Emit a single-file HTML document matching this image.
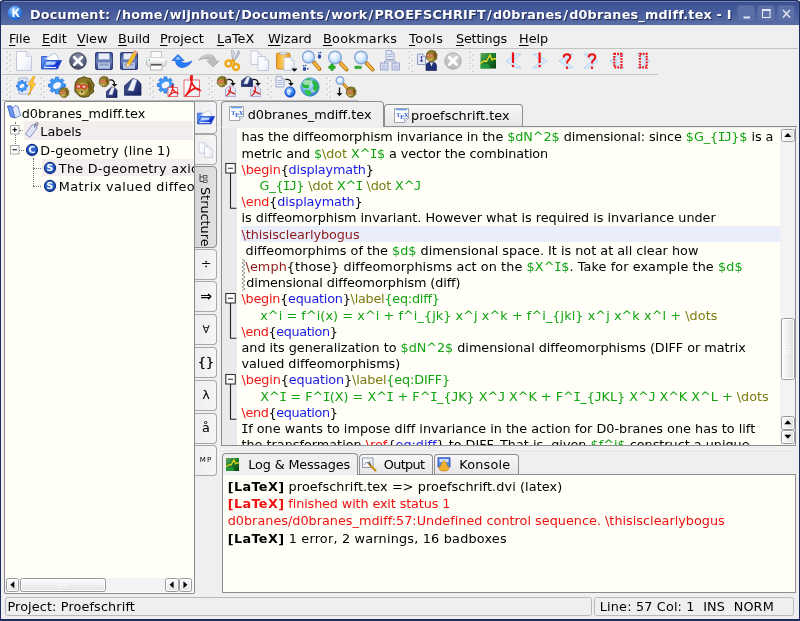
<!DOCTYPE html>
<html><head><meta charset="utf-8"><title>Kile</title>
<style>
*{box-sizing:border-box}
html,body{margin:0;padding:0}
body{width:800px;height:621px;position:relative;overflow:hidden;background:#fff;font-family:"DejaVu Sans","Liberation Sans",sans-serif;font-size:12.8px;color:#000}
.abs{position:absolute}
#win{will-change:transform;position:absolute;left:0;top:0;width:800px;height:621px;background:#efefef;border-radius:3px 3px 0 0;overflow:hidden}
#bl,#br,#bb{position:absolute;background:#1f2c5e}
#bl{left:0;top:0;width:1.3px;height:621px}
#br{right:0;top:0;width:1.3px;height:621px}
#bb{left:0;bottom:0;width:800px;height:1.7px}
#title{position:absolute;left:0;top:0;width:800px;height:25px;background:linear-gradient(#3b4f8d,#42579a 30%,#5a6ea6);border:1px solid #1f2c5e;border-bottom:none;border-radius:3px 3px 0 0}
#title .hl{position:absolute;left:3px;right:3px;top:0;height:1px;background:#6c80b4}
#ttext{position:absolute;left:29px;top:6px;line-height:16px;font-weight:bold;color:#fff;font-size:12.8px;white-space:pre;text-shadow:1px 1px 1px #1a254f;letter-spacing:.2px}
#ttext i{font-style:normal;margin:0 1.1px}
.tb{position:absolute;top:4px;width:18px;height:17px;border-radius:3px;background:#5c6fa7;border:1px solid #53669f}
#menubar{position:absolute;left:2px;top:25px;width:796px;height:23px;white-space:pre}
#menubar span{position:absolute;top:6px;line-height:16px;font-size:12.8px}
#menubar u{text-decoration:underline;text-underline-offset:1.5px}
.hline{position:absolute;height:1px;background:#c4c4c4}
.frame{position:absolute;background:#fffff7;border:1px solid #8e8e8e}
.t{position:absolute;white-space:pre}
.r{color:#f01616}.b{color:#1a1ae6}.g{color:#12a312}.o{color:#7a7a14}.m{color:#8e1a1a}
.t i{font-style:normal}
.sbtn{position:absolute;border:1px solid #9a9a9a;border-radius:2.500px;background:linear-gradient(#fdfdfd,#e2e2e2);box-shadow:inset 0 0 0 1px #fff}
.track{position:absolute;background:#f3f3f3;background-image:repeating-conic-gradient(#ececec 0 25%,#fafafa 0 50%);background-size:2px 2px}
.sbtn.v{background:linear-gradient(90deg,#fdfdfd,#dedede)}
.stab{position:absolute;border:1px solid #a8a8a8;border-left-color:#8a8a8a;border-radius:0 4px 4px 0;background:linear-gradient(90deg,#eeeeee,#f7f5f7)}
.stab.sel{background:linear-gradient(90deg,#d6d6d6,#e2e2e2);border-color:#8c8c8c}
.etab{position:absolute;border:1px solid #8e8e8e;border-bottom:none;border-radius:4px 4px 0 0;background:linear-gradient(#f8f8f8,#e6e6e6)}
.etab.sel{background:#efefef}
.sbox{position:absolute;border:1px solid #b9b9b9;border-radius:2.5px}
.t s{text-decoration:none;font-family:"DejaVu Sans Mono","Liberation Mono",monospace;margin:0 -.55px}
.t b{letter-spacing:.38px}
</style></head><body>
<div id="win">
<div id="title"><div class="hl"></div>
<svg class="abs" style="left:6px;top:4px" width="16" height="16" viewBox="0 0 16 16"><defs><radialGradient id="gk" cx=".4" cy=".3" r=".8"><stop offset="0" stop-color="#9fd0ff"/><stop offset=".6" stop-color="#2f7fe8"/><stop offset="1" stop-color="#0f4fc0"/></radialGradient></defs><circle cx="8" cy="8" r="7.200" fill="url(#gk)"/><path d="M5.500 3.500 h2 v3.500 l2.800 -3.500 h2.300 l-3 3.700 l3.300 4.800 h-2.400 l-2.300 -3.500 l-.7 .8 v2.700 h-2 z" fill="#fff"/></svg>
<div id="ttext">Document: <i>/</i>home<i>/</i>wijnhout<i>/</i>Documents<i>/</i>work<i>/</i>PROEFSCHRIFT<i>/</i>d0branes<i>/</i>d0branes_mdiff.tex - I</div>
<div class="tb" style="left:736px"></div><div class="tb" style="left:756px"></div><div class="tb" style="left:776px"></div>
<svg class="abs" style="left:736px;top:3px" width="60" height="19" viewBox="0 0 60 19"><path d="M6.500 13.500 h6.500" stroke="#e4e9f6" stroke-width="2"/><rect x="25.500" y="6" width="7.500" height="7.500" fill="none" stroke="#e4e9f6" stroke-width="1.100"/><path d="M25 6 h8.500" stroke="#e4e9f6" stroke-width="1.800"/><path d="M46 6 l7 7.500 M53 6 l-7 7.500" stroke="#e4e9f6" stroke-width="1.500"/></svg>
</div>
<div id="menubar">
<span style="left:7px"><u>F</u>ile</span><span style="left:40px"><u>E</u>dit</span><span style="left:75px"><u>V</u>iew</span><span style="left:116px"><u>B</u>uild</span><span style="left:158px"><u>P</u>roject</span><span style="left:215px"><u>L</u>aTeX</span><span style="left:266px"><u>W</u>izard</span><span style="left:321px;letter-spacing:.3px"><u>B</u>ookmarks</span><span style="left:407px;letter-spacing:.6px"><u>T</u>ools</span><span style="left:454px;letter-spacing:-.2px"><u>S</u>ettings</span><span style="left:517px"><u>H</u>elp</span>
</div>
<div class="hline" style="left:2px;top:48px;width:796px"></div>
<div class="hline" style="left:2px;top:74px;width:656px"></div>
<div class="hline" style="left:2px;top:100px;width:356px;background:#bcbcbc"></div>
<svg width="0" height="0" style="position:absolute"><defs>
<linearGradient id="gpage" x1="0" y1="0" x2="1" y2="1"><stop offset="0" stop-color="#ffffff"/><stop offset=".6" stop-color="#f6f7fc"/><stop offset="1" stop-color="#dfe2f0"/></linearGradient>
<linearGradient id="gblue" x1="0" y1="0" x2="1" y2=".6"><stop offset="0" stop-color="#a8ccff"/><stop offset=".45" stop-color="#4a86f0"/><stop offset=".75" stop-color="#1030d0"/><stop offset="1" stop-color="#2a50d8"/></linearGradient>
<linearGradient id="gfloppy" x1="0" y1="0" x2="0" y2="1"><stop offset="0" stop-color="#34488c"/><stop offset=".5" stop-color="#6a80bc"/><stop offset="1" stop-color="#2a3c80"/></linearGradient>
<radialGradient id="glens" cx=".4" cy=".35" r=".7"><stop offset="0" stop-color="#ffffff"/><stop offset=".6" stop-color="#cfe6ff"/><stop offset="1" stop-color="#8fc0f5"/></radialGradient>
<radialGradient id="gx" cx=".5" cy=".3" r=".8"><stop offset="0" stop-color="#9098b0"/><stop offset="1" stop-color="#2e3550"/></radialGradient>
<radialGradient id="gxg" cx=".5" cy=".3" r=".8"><stop offset="0" stop-color="#d8d8d8"/><stop offset="1" stop-color="#b0b0b0"/></radialGradient>
<radialGradient id="gglobe" cx=".4" cy=".35" r=".7"><stop offset="0" stop-color="#e8f6ff"/><stop offset=".5" stop-color="#79b8f0"/><stop offset="1" stop-color="#2f6fc8"/></radialGradient>
<radialGradient id="gglobe2" cx=".4" cy=".35" r=".7"><stop offset="0" stop-color="#b8dcff"/><stop offset=".6" stop-color="#2f7bf0"/><stop offset="1" stop-color="#0a3fc0"/></radialGradient>
<linearGradient id="gclip" x1="0" y1="0" x2="1" y2="0"><stop offset="0" stop-color="#f0a020"/><stop offset=".5" stop-color="#ffd060"/><stop offset="1" stop-color="#e89818"/></linearGradient>
<linearGradient id="gdvi" x1="0" y1="0" x2="1" y2="1"><stop offset="0" stop-color="#4a5c98"/><stop offset="1" stop-color="#142060"/></linearGradient>
<linearGradient id="ggreen" x1="0" y1="0" x2="1" y2="1"><stop offset="0" stop-color="#5cae5c"/><stop offset=".5" stop-color="#1a7a2a"/><stop offset="1" stop-color="#0a4012"/></linearGradient>
<linearGradient id="ggray" x1="0" y1="0" x2="0" y2="1"><stop offset="0" stop-color="#d0d0d0"/><stop offset="1" stop-color="#9c9c9c"/></linearGradient>
</defs></svg>
<svg class="abs" style="left:6px;top:51px" width="8" height="22" viewBox="0 0 8 22"><rect x="0.6" y="0.6" width="1.300" height="1.300" fill="#b8b8b8"/><rect x="1.7" y="1.7" width="1.300" height="1.300" fill="#fff"/><rect x="3.5" y="3.35" width="1.300" height="1.300" fill="#b8b8b8"/><rect x="4.6" y="4.45" width="1.300" height="1.300" fill="#fff"/><rect x="0.6" y="6.1" width="1.300" height="1.300" fill="#b8b8b8"/><rect x="1.7" y="7.2" width="1.300" height="1.300" fill="#fff"/><rect x="3.5" y="8.85" width="1.300" height="1.300" fill="#b8b8b8"/><rect x="4.6" y="9.95" width="1.300" height="1.300" fill="#fff"/><rect x="0.6" y="11.6" width="1.300" height="1.300" fill="#b8b8b8"/><rect x="1.7" y="12.7" width="1.300" height="1.300" fill="#fff"/><rect x="3.5" y="14.35" width="1.300" height="1.300" fill="#b8b8b8"/><rect x="4.6" y="15.45" width="1.300" height="1.300" fill="#fff"/><rect x="0.6" y="17.1" width="1.300" height="1.300" fill="#b8b8b8"/><rect x="1.7" y="18.2" width="1.300" height="1.300" fill="#fff"/><rect x="3.5" y="19.85" width="1.300" height="1.300" fill="#b8b8b8"/><rect x="4.6" y="20.95" width="1.300" height="1.300" fill="#fff"/></svg>
<svg class="abs" style="left:12px;top:49px" width="24" height="24" viewBox="0 0 24 24"><path d="M4.5 2.5 h10 l5 5 v14 h-15 z" fill="url(#gpage)" stroke="#b8bdd6" stroke-width=".8"/><path d="M14.5 2.5 v5 h5" fill="#e8ebf5" stroke="#b8bdd6" stroke-width=".6"/></svg>
<svg class="abs" style="left:39px;top:49px" width="24" height="24" viewBox="0 0 24 24"><path d="M2.500 7.500 h5.500 l1.500 2 h8 v10 h-15 z" fill="#5a8cf0" stroke="#2a50c8" stroke-width=".8"/><path d="M5.500 10 l10.500 -6 l3.500 5.500 l-2 4 z" fill="#fbfdff" stroke="#8aa8e8" stroke-width=".6"/><path d="M6.500 11.500 h16 l-4 8.500 h-16 z" fill="url(#gblue)" stroke="#1f44c0" stroke-width=".8"/><path d="M8 12.800 h9 l-1.500 3 h-9 z" fill="#d0e4ff" opacity=".85"/><path d="M5 18.500 h12" stroke="#fff" stroke-width="1.200" opacity=".9"/></svg>
<svg class="abs" style="left:66px;top:49px" width="24" height="24" viewBox="0 0 24 24"><circle cx="12" cy="12" r="8.300" fill="url(#gx)" stroke="#4a5068" stroke-width="1"/><path d="M8.200 8.200 L15.800 15.800 M15.800 8.200 L8.200 15.800" stroke="#fff" stroke-width="2.800" stroke-linecap="round"/></svg>
<svg class="abs" style="left:92px;top:49px" width="24" height="24" viewBox="0 0 24 24"><rect x="3.5" y="3.5" width="17" height="17" rx="1.2" fill="url(#gfloppy)" stroke="#1a2a68" stroke-width=".8"/><rect x="6.5" y="4.3" width="11" height="6.12" fill="#e8ecf8"/><rect x="6" y="13.36" width="12" height="6.46" fill="#b8c4e4"/><rect x="7.5" y="14.72" width="9" height="1.7" fill="#8898c8"/></svg>
<svg class="abs" style="left:117px;top:49px" width="24" height="24" viewBox="0 0 24 24"><rect x="3.5" y="3.5" width="17" height="17" rx="1.2" fill="url(#gfloppy)" stroke="#1a2a68" stroke-width=".8"/><rect x="6.5" y="4.3" width="11" height="6.12" fill="#e8ecf8"/><rect x="6" y="13.36" width="12" height="6.46" fill="#b8c4e4"/><rect x="7.5" y="14.72" width="9" height="1.7" fill="#8898c8"/><path d="M17.500 1.500 l3 1.500 l-7.500 13 l-3.500 2 l0.500 -3.500 z" fill="#f8c030" stroke="#c88a10" stroke-width=".6"/><path d="M17.500 1.500 l3 1.500 l-1 1.800 l-3 -1.500 z" fill="#f0a0a0"/><path d="M9.500 18 l0.500 -3.500 l3 1.500 z" fill="#f8e0b0"/></svg>
<svg class="abs" style="left:144px;top:49px" width="24" height="24" viewBox="0 0 24 24"><rect x="7" y="2.500" width="10.500" height="7" fill="#fafafa" stroke="#b0b0b0" stroke-width=".7"/><rect x="2.500" y="8.500" width="19.500" height="9" rx="3" fill="#e9e9e9" stroke="#a8a8a8" stroke-width=".8"/><rect x="2.500" y="8.500" width="19.500" height="4" rx="2.500" fill="#f8f8f8"/><rect x="6.500" y="15" width="11.500" height="6" fill="#fdfdfd" stroke="#9c9c9c" stroke-width=".7"/><rect x="7" y="15" width="10.500" height="1.600" fill="#555"/><circle cx="5.200" cy="11" r=".8" fill="#40b040"/></svg>
<svg class="abs" style="left:171px;top:49px" width="24" height="24" viewBox="0 0 24 24"><path d="M7 5.500 L13 11.500 L10 11.500 C10.500 14 14 15.500 21 12 C18 17.500 12 19.500 8.500 18 C5.500 16.500 4.500 14 4.500 11.500 L1 11.500 Z" fill="#2a7cf4" stroke="#1a5ce0" stroke-width=".7" stroke-linejoin="round"/><path d="M7 7.500 L10 10.500 L4 10.500 Z" fill="#9ccaff"/></svg>
<svg class="abs" style="left:196px;top:49px" width="24" height="24" viewBox="0 0 24 24"><path d="M17 18 L11 12 L14 12 C13.500 10 10 8.500 2.500 11 C6 6.500 11 5 15 6 C18.500 7 19.500 9.500 19.500 12 L23 12 Z" fill="#bcbcbc" stroke="#a6a6a6" stroke-width=".7" stroke-linejoin="round"/><path d="M6 8.500 C9 6.500 13 6.200 16 7.500" fill="none" stroke="#d8d8d8" stroke-width="1"/></svg>
<svg class="abs" style="left:221px;top:49px" width="24" height="24" viewBox="0 0 24 24"><path d="M12.500 13 L17.500 1.500 L19 4 Z" fill="#c8ccd8" stroke="#8890a8" stroke-width=".6"/><path d="M11.500 13 L10.500 1 L13.500 3 Z" fill="#e0e4ee" stroke="#8890a8" stroke-width=".6"/><circle cx="7.500" cy="14.500" r="3" fill="none" stroke="#f0a818" stroke-width="2.400"/><circle cx="15" cy="18" r="3" fill="none" stroke="#f0a818" stroke-width="2.400"/><path d="M9.500 12.500 L12.500 11 L13.500 15" fill="none" stroke="#f0a818" stroke-width="2"/></svg>
<svg class="abs" style="left:248px;top:49px" width="24" height="24" viewBox="0 0 24 24"><path d="M3 2 h7 l3.5 3.5 v10 h-10.5 z" fill="url(#gpage)" stroke="#b8bdd6" stroke-width=".8"/><path d="M10 2 v3.5 h3.5" fill="#e8ebf5" stroke="#b8bdd6" stroke-width=".6"/><path d="M10 7.5 h7 l3.5 3.5 v10.5 h-10.5 z" fill="url(#gpage)" stroke="#b8bdd6" stroke-width=".8"/><path d="M17 7.5 v3.5 h3.5" fill="#e8ebf5" stroke="#b8bdd6" stroke-width=".6"/></svg>
<svg class="abs" style="left:274px;top:49px" width="24" height="24" viewBox="0 0 24 24"><rect x="2.500" y="4" width="13.500" height="16" rx="1.500" fill="url(#gclip)" stroke="#c07a10" stroke-width=".8"/><path d="M5.500 5.500 a3.800 3.200 0 0 1 7.500 0 z" fill="#e8e8ee" stroke="#a8a8b8" stroke-width=".7"/><path d="M10 8.5 h7 l3 3 v10 h-10 z" fill="url(#gpage)" stroke="#b8bdd6" stroke-width=".8"/><path d="M17 8.5 v3 h3" fill="#e8ebf5" stroke="#b8bdd6" stroke-width=".6"/><path d="M17.500 19.500 h6 l-3 3.200 z" fill="#000"/></svg>
<svg class="abs" style="left:300px;top:49px" width="24" height="24" viewBox="0 0 24 24"><path d="M13.82 13.32 L19.5 20" stroke="#b87818" stroke-width="4" stroke-linecap="round"/><path d="M14.32 13.82 L19.2 19.7" stroke="#f8b840" stroke-width="2.2" stroke-linecap="round"/><circle cx="8.5" cy="8" r="6" fill="url(#glens)" stroke="#8aa8d8" stroke-width="1.400"/><ellipse cx="19.500" cy="7.500" rx="1.700" ry="2.200" fill="#2a4aa8"/><circle cx="18.800" cy="3.800" r=".8" fill="#2a4aa8"/><circle cx="20.800" cy="3.600" r=".8" fill="#2a4aa8"/><ellipse cx="4.500" cy="20" rx="1.700" ry="2" fill="#2a4aa8"/><circle cx="3.500" cy="16.800" r=".8" fill="#2a4aa8"/><circle cx="5.500" cy="16.500" r=".8" fill="#2a4aa8"/><circle cx="7.800" cy="19.800" r=".9" fill="#2a4aa8"/></svg>
<svg class="abs" style="left:326px;top:49px" width="24" height="24" viewBox="0 0 24 24"><path d="M14.536 14.036 L20.5 20.5" stroke="#b87818" stroke-width="4" stroke-linecap="round"/><path d="M15.036 14.536 L20.2 20.2" stroke="#f8b840" stroke-width="2.2" stroke-linecap="round"/><circle cx="9" cy="8.5" r="6.3" fill="url(#glens)" stroke="#8aa8d8" stroke-width="1.400"/><path d="M3.800 16 h2.800 v-1.800 h0 l0 0 v0 h0 v1.800 h2.800 l-2.800 0 v0 z" fill="none"/><path d="M2.800 17 h2 v-2 h2.400 v2 h2 v2.400 h-2 v2 h-2.400 v-2 h-2 z" fill="#2ab02a" stroke="#108a10" stroke-width=".5"/></svg>
<svg class="abs" style="left:352px;top:49px" width="24" height="24" viewBox="0 0 24 24"><path d="M14.536 14.036 L20.5 20.5" stroke="#b87818" stroke-width="4" stroke-linecap="round"/><path d="M15.036 14.536 L20.2 20.2" stroke="#f8b840" stroke-width="2.2" stroke-linecap="round"/><circle cx="9" cy="8.5" r="6.3" fill="url(#glens)" stroke="#8aa8d8" stroke-width="1.400"/><rect x="2.800" y="17.200" width="6.600" height="2.400" rx=".5" fill="#2ab02a" stroke="#108a10" stroke-width=".5"/></svg>
<svg class="abs" style="left:378px;top:49px" width="24" height="24" viewBox="0 0 24 24"><path d="M12 9 v3 M6.500 15 v-3 h11 v3" fill="none" stroke="#98a4cc" stroke-width="1"/><path d="M8 1.5 h5.5 l2.5 2.5 v6.5 h-8 z" fill="#e4e8f6" stroke="#8c98c4" stroke-width=".8"/><path d="M13.5 1.5 v2.5 h2.5" fill="#e8ebf5" stroke="#8c98c4" stroke-width=".6"/><path d="M9.500 5.500 h5 M9.500 7.500 h5" stroke="#98a4cc" stroke-width=".8"/><rect x="2.500" y="14" width="7.500" height="7" fill="#d8def0" stroke="#8c98c4" stroke-width=".8"/><rect x="14" y="14" width="7.500" height="7" fill="#d8def0" stroke="#8c98c4" stroke-width=".8"/><path d="M4 17 h4.500 M4 19 h4.500 M15.500 17 h4.500 M15.500 19 h4.500" stroke="#a8b2d4" stroke-width=".8"/></svg>
<svg class="abs" style="left:408px;top:51px" width="8" height="22" viewBox="0 0 8 22"><rect x="0.6" y="0.6" width="1.300" height="1.300" fill="#b8b8b8"/><rect x="1.7" y="1.7" width="1.300" height="1.300" fill="#fff"/><rect x="3.5" y="3.35" width="1.300" height="1.300" fill="#b8b8b8"/><rect x="4.6" y="4.45" width="1.300" height="1.300" fill="#fff"/><rect x="0.6" y="6.1" width="1.300" height="1.300" fill="#b8b8b8"/><rect x="1.7" y="7.2" width="1.300" height="1.300" fill="#fff"/><rect x="3.5" y="8.85" width="1.300" height="1.300" fill="#b8b8b8"/><rect x="4.6" y="9.95" width="1.300" height="1.300" fill="#fff"/><rect x="0.6" y="11.6" width="1.300" height="1.300" fill="#b8b8b8"/><rect x="1.7" y="12.7" width="1.300" height="1.300" fill="#fff"/><rect x="3.5" y="14.35" width="1.300" height="1.300" fill="#b8b8b8"/><rect x="4.6" y="15.45" width="1.300" height="1.300" fill="#fff"/><rect x="0.6" y="17.1" width="1.300" height="1.300" fill="#b8b8b8"/><rect x="1.7" y="18.2" width="1.300" height="1.300" fill="#fff"/><rect x="3.5" y="19.85" width="1.300" height="1.300" fill="#b8b8b8"/><rect x="4.6" y="20.95" width="1.300" height="1.300" fill="#fff"/></svg>
<svg class="abs" style="left:415px;top:49px" width="24" height="24" viewBox="0 0 24 24"><path d="M2.5 5 h5.5 l2.5 2.5 v8 h-8 z" fill="#e4e8f6" stroke="#7a88b8" stroke-width=".8"/><path d="M8 5 v2.5 h2.5" fill="#e8ebf5" stroke="#7a88b8" stroke-width=".6"/><path d="M6.500 8 v5 M4.800 11.500 q1.700 2 3.400 0" fill="none" stroke="#3a4a98" stroke-width="1"/><circle cx="6.500" cy="8" r=".9" fill="#3a4a98"/><path d="M11 21.500 v-5 q0 -2.500 3 -3 l2.500 -0.500 l2.500 0.500 q2.500 0.500 2.500 3 v5 z" fill="#1f2f78" stroke="#101a50" stroke-width=".6"/><path d="M15 13.500 l1.500 4 l1.500 -4 z" fill="#f4f4fa"/><g transform="translate(16.5 7) scale(0.611111)"><path d="M0 -9.500 L3 -8.500 L6 -8 L7.500 -5 L9.500 -2 L8.500 1.500 L9 4.500 L6 6.500 L4 9 L0 9.500 L-3.500 9 L-6 6.500 L-8.500 4 L-8.500 0 L-8 -4 L-5.500 -7.500 L-3 -8.500 Z" fill="#8a7a28" stroke="#5a4c10" stroke-width="1"/><ellipse cx="-1.500" cy="1.500" rx="5.500" ry="6" fill="#b09838"/><path d="M3 -7 L7 -3 L7.500 2 L5 6 L4 0 Z" fill="#6a5a18"/><ellipse cx="-2" cy="5.500" rx="2.600" ry="2" fill="#d8c070"/><rect x="-2.800" y="4" width="1.800" height="1.200" fill="#3a2a08"/><ellipse cx="-5.200" cy="-.5" rx="2.200" ry="1.600" fill="#e8c8b0" stroke="#d82828" stroke-width="1"/><ellipse cx="0" cy="-.3" rx="2.200" ry="1.600" fill="#e8c8b0" stroke="#d82828" stroke-width="1"/><path d="M2.200 -.5 L5.500 -1.500" stroke="#d82828" stroke-width=".9"/></g></svg>
<svg class="abs" style="left:441px;top:49px" width="24" height="24" viewBox="0 0 24 24"><circle cx="12" cy="12" r="8.300" fill="url(#gxg)" stroke="#b4b4b4" stroke-width="1"/><path d="M8.200 8.200 L15.800 15.800 M15.800 8.200 L8.200 15.800" stroke="#fff" stroke-width="2.800" stroke-linecap="round"/></svg>
<svg class="abs" style="left:469px;top:51px" width="8" height="22" viewBox="0 0 8 22"><rect x="0.6" y="0.6" width="1.300" height="1.300" fill="#b8b8b8"/><rect x="1.7" y="1.7" width="1.300" height="1.300" fill="#fff"/><rect x="3.5" y="3.35" width="1.300" height="1.300" fill="#b8b8b8"/><rect x="4.6" y="4.45" width="1.300" height="1.300" fill="#fff"/><rect x="0.6" y="6.1" width="1.300" height="1.300" fill="#b8b8b8"/><rect x="1.7" y="7.2" width="1.300" height="1.300" fill="#fff"/><rect x="3.5" y="8.85" width="1.300" height="1.300" fill="#b8b8b8"/><rect x="4.6" y="9.95" width="1.300" height="1.300" fill="#fff"/><rect x="0.6" y="11.6" width="1.300" height="1.300" fill="#b8b8b8"/><rect x="1.7" y="12.7" width="1.300" height="1.300" fill="#fff"/><rect x="3.5" y="14.35" width="1.300" height="1.300" fill="#b8b8b8"/><rect x="4.6" y="15.45" width="1.300" height="1.300" fill="#fff"/><rect x="0.6" y="17.1" width="1.300" height="1.300" fill="#b8b8b8"/><rect x="1.7" y="18.2" width="1.300" height="1.300" fill="#fff"/><rect x="3.5" y="19.85" width="1.300" height="1.300" fill="#b8b8b8"/><rect x="4.6" y="20.95" width="1.300" height="1.300" fill="#fff"/></svg>
<svg class="abs" style="left:476px;top:49px" width="24" height="24" viewBox="0 0 24 24"><rect x="4.500" y="4" width="15.500" height="15.500" fill="url(#ggreen)"/><path d="M4.500 14.500 L8 12 L10.500 12.500 L14 6 L16 11 L18 9.500 L20 10" fill="none" stroke="#f0d820" stroke-width="1.300"/><path d="M4.500 19.500 v-3 q3 -2.500 5 -1 q2 -2 4 1 l1 3 z" fill="#2aa040" opacity=".8"/></svg>
<svg class="abs" style="left:502px;top:49px" width="24" height="24" viewBox="0 0 24 24"><path d="M14.5 5 L4 12 L14.5 19 L19 19 L10.3 12 L19 5 Z" fill="#dcecfc" stroke="#a4ccf6" stroke-width=".8" stroke-linejoin="round"/><path d="M11 3.400 v10.600" stroke="#f01010" stroke-width="2.200"/><circle cx="11" cy="17" r="1.250" fill="#f01010"/></svg>
<svg class="abs" style="left:528px;top:49px" width="24" height="24" viewBox="0 0 24 24"><path d="M9.2 5 L19 12 L9.2 19 L5 19 L13.12 12 L5 5 Z" fill="#dcecfc" stroke="#a4ccf6" stroke-width=".8" stroke-linejoin="round"/><path d="M11.6 3.400 v10.600" stroke="#f01010" stroke-width="2.200"/><circle cx="11.6" cy="17" r="1.250" fill="#f01010"/></svg>
<svg class="abs" style="left:554px;top:49px" width="24" height="24" viewBox="0 0 24 24"><path d="M14.8 5 L5 12 L14.8 19 L19 19 L10.88 12 L19 5 Z" fill="#dcecfc" stroke="#a4ccf6" stroke-width=".8" stroke-linejoin="round"/><path d="M9.7 8.500 q0 -3.200 3.300 -3.200 q3.300 0 3.300 2.800 q0 1.800 -1.800 3 q-1.500 1 -1.500 3.400" fill="none" stroke="#f01010" stroke-width="2"/><circle cx="13" cy="18.800" r="1.250" fill="#f01010"/></svg>
<svg class="abs" style="left:579px;top:49px" width="24" height="24" viewBox="0 0 24 24"><path d="M9.2 5 L19 12 L9.2 19 L5 19 L13.12 12 L5 5 Z" fill="#dcecfc" stroke="#a4ccf6" stroke-width=".8" stroke-linejoin="round"/><path d="M9.7 8.500 q0 -3.200 3.300 -3.200 q3.300 0 3.300 2.800 q0 1.800 -1.800 3 q-1.500 1 -1.500 3.400" fill="none" stroke="#f01010" stroke-width="2"/><circle cx="13" cy="18.800" r="1.250" fill="#f01010"/></svg>
<svg class="abs" style="left:605px;top:49px" width="24" height="24" viewBox="0 0 24 24"><path d="M14.8 5 L5 12 L14.8 19 L19 19 L10.88 12 L19 5 Z" fill="#dcecfc" stroke="#a4ccf6" stroke-width=".8" stroke-linejoin="round"/><rect x="9.3" y="4.900" width="7.2" height="13.400" fill="none" stroke="#f01010" stroke-width="2.200" stroke-dasharray="1.700 1.180"/></svg>
<svg class="abs" style="left:631px;top:49px" width="24" height="24" viewBox="0 0 24 24"><path d="M9.9 5 L19 12 L9.9 19 L6 19 L13.54 12 L6 5 Z" fill="#dcecfc" stroke="#a4ccf6" stroke-width=".8" stroke-linejoin="round"/><rect x="8.9" y="4.900" width="6.8" height="13.400" fill="none" stroke="#f01010" stroke-width="2.200" stroke-dasharray="1.700 1.180"/></svg>
<svg class="abs" style="left:6px;top:77px" width="8" height="22" viewBox="0 0 8 22"><rect x="0.6" y="0.6" width="1.300" height="1.300" fill="#b8b8b8"/><rect x="1.7" y="1.7" width="1.300" height="1.300" fill="#fff"/><rect x="3.5" y="3.35" width="1.300" height="1.300" fill="#b8b8b8"/><rect x="4.6" y="4.45" width="1.300" height="1.300" fill="#fff"/><rect x="0.6" y="6.1" width="1.300" height="1.300" fill="#b8b8b8"/><rect x="1.7" y="7.2" width="1.300" height="1.300" fill="#fff"/><rect x="3.5" y="8.85" width="1.300" height="1.300" fill="#b8b8b8"/><rect x="4.6" y="9.95" width="1.300" height="1.300" fill="#fff"/><rect x="0.6" y="11.6" width="1.300" height="1.300" fill="#b8b8b8"/><rect x="1.7" y="12.7" width="1.300" height="1.300" fill="#fff"/><rect x="3.5" y="14.35" width="1.300" height="1.300" fill="#b8b8b8"/><rect x="4.6" y="15.45" width="1.300" height="1.300" fill="#fff"/><rect x="0.6" y="17.1" width="1.300" height="1.300" fill="#b8b8b8"/><rect x="1.7" y="18.2" width="1.300" height="1.300" fill="#fff"/><rect x="3.5" y="19.85" width="1.300" height="1.300" fill="#b8b8b8"/><rect x="4.6" y="20.95" width="1.300" height="1.300" fill="#fff"/></svg>
<svg class="abs" style="left:14px;top:75px" width="24" height="24" viewBox="0 0 24 24"><path d="M5 3 h8 l3.5 3.5 v12.5 h-11.5 z" fill="#e4e8f6" stroke="#98a4cc" stroke-width=".8"/><path d="M13 3 v3.5 h3.5" fill="#e8ebf5" stroke="#98a4cc" stroke-width=".6"/><path d="M13.42 10.05 L13.42 11.95 L12.06 11.98 L11.56 13.18 L12.50 14.16 L11.16 15.50 L10.18 14.56 L8.98 15.06 L8.95 16.42 L7.05 16.42 L7.02 15.06 L5.82 14.56 L4.84 15.50 L3.50 14.16 L4.44 13.18 L3.94 11.98 L2.58 11.95 L2.58 10.05 L3.94 10.02 L4.44 8.82 L3.50 7.84 L4.84 6.50 L5.82 7.44 L7.02 6.94 L7.05 5.58 L8.95 5.58 L8.98 6.94 L10.18 7.44 L11.16 6.50 L12.50 7.84 L11.56 8.82 L12.06 10.02 Z" fill="#3f9cfa" stroke="#1c6ce0" stroke-width=".8" stroke-linejoin="round"/><ellipse cx="8" cy="11" rx="3.08" ry="2.31" transform="rotate(-30 8 11)" fill="#f2f7ff" stroke="#1c6ce0" stroke-width=".6"/><path d="M19 1.500 L14.500 10 L17.500 10.500 L14.500 20.500 L21.500 8.500 L18.500 8 L21 1.500 Z" fill="#ffc820" stroke="#e89010" stroke-width=".6" stroke-linejoin="round"/></svg>
<svg class="abs" style="left:40px;top:77px" width="8" height="22" viewBox="0 0 8 22"><rect x="0.6" y="0.6" width="1.300" height="1.300" fill="#b8b8b8"/><rect x="1.7" y="1.7" width="1.300" height="1.300" fill="#fff"/><rect x="3.5" y="3.35" width="1.300" height="1.300" fill="#b8b8b8"/><rect x="4.6" y="4.45" width="1.300" height="1.300" fill="#fff"/><rect x="0.6" y="6.1" width="1.300" height="1.300" fill="#b8b8b8"/><rect x="1.7" y="7.2" width="1.300" height="1.300" fill="#fff"/><rect x="3.5" y="8.85" width="1.300" height="1.300" fill="#b8b8b8"/><rect x="4.6" y="9.95" width="1.300" height="1.300" fill="#fff"/><rect x="0.6" y="11.6" width="1.300" height="1.300" fill="#b8b8b8"/><rect x="1.7" y="12.7" width="1.300" height="1.300" fill="#fff"/><rect x="3.5" y="14.35" width="1.300" height="1.300" fill="#b8b8b8"/><rect x="4.6" y="15.45" width="1.300" height="1.300" fill="#fff"/><rect x="0.6" y="17.1" width="1.300" height="1.300" fill="#b8b8b8"/><rect x="1.7" y="18.2" width="1.300" height="1.300" fill="#fff"/><rect x="3.5" y="19.85" width="1.300" height="1.300" fill="#b8b8b8"/><rect x="4.6" y="20.95" width="1.300" height="1.300" fill="#fff"/></svg>
<svg class="abs" style="left:47px;top:75px" width="24" height="24" viewBox="0 0 24 24"><path d="M18.37 9.04 L18.37 11.96 L16.28 12.01 L15.51 13.88 L16.95 15.39 L14.89 17.45 L13.38 16.01 L11.51 16.78 L11.46 18.87 L8.54 18.87 L8.49 16.78 L6.62 16.01 L5.11 17.45 L3.05 15.39 L4.49 13.88 L3.72 12.01 L1.63 11.96 L1.63 9.04 L3.72 8.99 L4.49 7.12 L3.05 5.61 L5.11 3.55 L6.62 4.99 L8.49 4.22 L8.54 2.13 L11.46 2.13 L11.51 4.22 L13.38 4.99 L14.89 3.55 L16.95 5.61 L15.51 7.12 L16.28 8.99 Z" fill="#3f9cfa" stroke="#1c6ce0" stroke-width=".8" stroke-linejoin="round"/><ellipse cx="10" cy="10.5" rx="4.76" ry="3.57" transform="rotate(-30 10 10.5)" fill="#f2f7ff" stroke="#1c6ce0" stroke-width=".6"/><g transform="translate(17 17.5) scale(0.533333)"><path d="M0 -9.500 L3 -8.500 L6 -8 L7.500 -5 L9.500 -2 L8.500 1.500 L9 4.500 L6 6.500 L4 9 L0 9.500 L-3.500 9 L-6 6.500 L-8.500 4 L-8.500 0 L-8 -4 L-5.500 -7.500 L-3 -8.500 Z" fill="#8a7a28" stroke="#5a4c10" stroke-width="1"/><ellipse cx="-1.500" cy="1.500" rx="5.500" ry="6" fill="#b09838"/><path d="M3 -7 L7 -3 L7.500 2 L5 6 L4 0 Z" fill="#6a5a18"/><ellipse cx="-2" cy="5.500" rx="2.600" ry="2" fill="#d8c070"/><rect x="-2.800" y="4" width="1.800" height="1.200" fill="#3a2a08"/><ellipse cx="-5.200" cy="-.5" rx="2.200" ry="1.600" fill="#e8c8b0" stroke="#d82828" stroke-width="1"/><ellipse cx="0" cy="-.3" rx="2.200" ry="1.600" fill="#e8c8b0" stroke="#d82828" stroke-width="1"/><path d="M2.200 -.5 L5.500 -1.500" stroke="#d82828" stroke-width=".9"/></g></svg>
<svg class="abs" style="left:72px;top:75px" width="24" height="24" viewBox="0 0 24 24"><g transform="translate(12 12) scale(1.06667)"><path d="M0 -9.500 L3 -8.500 L6 -8 L7.500 -5 L9.500 -2 L8.500 1.500 L9 4.500 L6 6.500 L4 9 L0 9.500 L-3.500 9 L-6 6.500 L-8.500 4 L-8.500 0 L-8 -4 L-5.500 -7.500 L-3 -8.500 Z" fill="#8a7a28" stroke="#5a4c10" stroke-width="1"/><ellipse cx="-1.500" cy="1.500" rx="5.500" ry="6" fill="#b09838"/><path d="M3 -7 L7 -3 L7.500 2 L5 6 L4 0 Z" fill="#6a5a18"/><ellipse cx="-2" cy="5.500" rx="2.600" ry="2" fill="#d8c070"/><rect x="-2.800" y="4" width="1.800" height="1.200" fill="#3a2a08"/><ellipse cx="-5.200" cy="-.5" rx="2.200" ry="1.600" fill="#e8c8b0" stroke="#d82828" stroke-width="1"/><ellipse cx="0" cy="-.3" rx="2.200" ry="1.600" fill="#e8c8b0" stroke="#d82828" stroke-width="1"/><path d="M2.200 -.5 L5.500 -1.500" stroke="#d82828" stroke-width=".9"/></g></svg>
<svg class="abs" style="left:97px;top:75px" width="24" height="24" viewBox="0 0 24 24"><g transform="translate(7 6.5) scale(0.555556)"><path d="M0 -9.500 L3 -8.500 L6 -8 L7.500 -5 L9.500 -2 L8.500 1.500 L9 4.500 L6 6.500 L4 9 L0 9.500 L-3.500 9 L-6 6.500 L-8.500 4 L-8.500 0 L-8 -4 L-5.500 -7.500 L-3 -8.500 Z" fill="#8a7a28" stroke="#5a4c10" stroke-width="1"/><ellipse cx="-1.500" cy="1.500" rx="5.500" ry="6" fill="#b09838"/><path d="M3 -7 L7 -3 L7.500 2 L5 6 L4 0 Z" fill="#6a5a18"/><ellipse cx="-2" cy="5.500" rx="2.600" ry="2" fill="#d8c070"/><rect x="-2.800" y="4" width="1.800" height="1.200" fill="#3a2a08"/><ellipse cx="-5.200" cy="-.5" rx="2.200" ry="1.600" fill="#e8c8b0" stroke="#d82828" stroke-width="1"/><ellipse cx="0" cy="-.3" rx="2.200" ry="1.600" fill="#e8c8b0" stroke="#d82828" stroke-width="1"/><path d="M2.200 -.5 L5.500 -1.500" stroke="#d82828" stroke-width=".9"/></g><path d="M12.5 5 C16 4.5 17.5 6 17.5 9.5" fill="none" stroke="#111" stroke-width="1.300"/><path d="M14.7 9 h5.600 l-2.800 3 z" fill="#111"/><path d="M9.5 16.5 l5.25 -4.5 l3.15 1 l2.1 2.5 v7 h-10.5 z" fill="url(#gdvi)" stroke="#101a50" stroke-width=".7"/><path d="M11.6 19.5 l3.15 -7.2 l2.625 0.5 l-2.1 7 z" fill="#f0f2fa" stroke="#a8b0d0" stroke-width=".5"/></svg>
<svg class="abs" style="left:121px;top:75px" width="24" height="24" viewBox="0 0 24 24"><path d="M3.5 10.7 l8.25 -7.2 l4.95 1.6 l3.3 4 v11.2 h-16.5 z" fill="url(#gdvi)" stroke="#101a50" stroke-width=".7"/><path d="M6.8 15.5 l4.95 -11.52 l4.125 0.8 l-3.3 11.2 z" fill="#f0f2fa" stroke="#a8b0d0" stroke-width=".5"/></svg>
<svg class="abs" style="left:149px;top:77px" width="8" height="22" viewBox="0 0 8 22"><rect x="0.6" y="0.6" width="1.300" height="1.300" fill="#b8b8b8"/><rect x="1.7" y="1.7" width="1.300" height="1.300" fill="#fff"/><rect x="3.5" y="3.35" width="1.300" height="1.300" fill="#b8b8b8"/><rect x="4.6" y="4.45" width="1.300" height="1.300" fill="#fff"/><rect x="0.6" y="6.1" width="1.300" height="1.300" fill="#b8b8b8"/><rect x="1.7" y="7.2" width="1.300" height="1.300" fill="#fff"/><rect x="3.5" y="8.85" width="1.300" height="1.300" fill="#b8b8b8"/><rect x="4.6" y="9.95" width="1.300" height="1.300" fill="#fff"/><rect x="0.6" y="11.6" width="1.300" height="1.300" fill="#b8b8b8"/><rect x="1.7" y="12.7" width="1.300" height="1.300" fill="#fff"/><rect x="3.5" y="14.35" width="1.300" height="1.300" fill="#b8b8b8"/><rect x="4.6" y="15.45" width="1.300" height="1.300" fill="#fff"/><rect x="0.6" y="17.1" width="1.300" height="1.300" fill="#b8b8b8"/><rect x="1.7" y="18.2" width="1.300" height="1.300" fill="#fff"/><rect x="3.5" y="19.85" width="1.300" height="1.300" fill="#b8b8b8"/><rect x="4.6" y="20.95" width="1.300" height="1.300" fill="#fff"/></svg>
<svg class="abs" style="left:156px;top:75px" width="24" height="24" viewBox="0 0 24 24"><path d="M17.58 8.59 L17.58 11.41 L15.56 11.45 L14.81 13.26 L16.21 14.72 L14.22 16.71 L12.76 15.31 L10.95 16.06 L10.91 18.08 L8.09 18.08 L8.05 16.06 L6.24 15.31 L4.78 16.71 L2.79 14.72 L4.19 13.26 L3.44 11.45 L1.42 11.41 L1.42 8.59 L3.44 8.55 L4.19 6.74 L2.79 5.28 L4.78 3.29 L6.24 4.69 L8.05 3.94 L8.09 1.92 L10.91 1.92 L10.95 3.94 L12.76 4.69 L14.22 3.29 L16.21 5.28 L14.81 6.74 L15.56 8.55 Z" fill="#3f9cfa" stroke="#1c6ce0" stroke-width=".8" stroke-linejoin="round"/><ellipse cx="9.5" cy="10" rx="4.592" ry="3.444" transform="rotate(-30 9.5 10)" fill="#f2f7ff" stroke="#1c6ce0" stroke-width=".6"/><rect x="12" y="12.5" width="9.5" height="9" fill="url(#gpage)" stroke="#e06060" stroke-width=".9"/><path d="M12.95 21.05 C16.75 17.9 17.225 10.25 16.75 9.8 C14.85 11.6 17.7 17.45 21.69 18.08 C19.6 15.65 15.8 17.9 12.95 21.05" fill="none" stroke="#e81818" stroke-width="1.2" stroke-linecap="round"/></svg>
<svg class="abs" style="left:180px;top:75px" width="24" height="24" viewBox="0 0 24 24"><rect x="4" y="5" width="15.5" height="16.5" fill="url(#gpage)" stroke="#e06060" stroke-width=".9"/><path d="M5.55 20.675 C11.75 14.9 12.525 0.875 11.75 0.05 C8.65 3.35 13.3 14.075 19.81 15.23 C16.4 10.775 10.2 14.9 5.55 20.675" fill="none" stroke="#e81818" stroke-width="1.7" stroke-linecap="round"/></svg>
<svg class="abs" style="left:208px;top:77px" width="8" height="22" viewBox="0 0 8 22"><rect x="0.6" y="0.6" width="1.300" height="1.300" fill="#b8b8b8"/><rect x="1.7" y="1.7" width="1.300" height="1.300" fill="#fff"/><rect x="3.5" y="3.35" width="1.300" height="1.300" fill="#b8b8b8"/><rect x="4.6" y="4.45" width="1.300" height="1.300" fill="#fff"/><rect x="0.6" y="6.1" width="1.300" height="1.300" fill="#b8b8b8"/><rect x="1.7" y="7.2" width="1.300" height="1.300" fill="#fff"/><rect x="3.5" y="8.85" width="1.300" height="1.300" fill="#b8b8b8"/><rect x="4.6" y="9.95" width="1.300" height="1.300" fill="#fff"/><rect x="0.6" y="11.6" width="1.300" height="1.300" fill="#b8b8b8"/><rect x="1.7" y="12.7" width="1.300" height="1.300" fill="#fff"/><rect x="3.5" y="14.35" width="1.300" height="1.300" fill="#b8b8b8"/><rect x="4.6" y="15.45" width="1.300" height="1.300" fill="#fff"/><rect x="0.6" y="17.1" width="1.300" height="1.300" fill="#b8b8b8"/><rect x="1.7" y="18.2" width="1.300" height="1.300" fill="#fff"/><rect x="3.5" y="19.85" width="1.300" height="1.300" fill="#b8b8b8"/><rect x="4.6" y="20.95" width="1.300" height="1.300" fill="#fff"/></svg>
<svg class="abs" style="left:215px;top:75px" width="24" height="24" viewBox="0 0 24 24"><g transform="translate(7 6.5) scale(0.555556)"><path d="M0 -9.500 L3 -8.500 L6 -8 L7.500 -5 L9.500 -2 L8.500 1.500 L9 4.500 L6 6.500 L4 9 L0 9.500 L-3.500 9 L-6 6.500 L-8.500 4 L-8.500 0 L-8 -4 L-5.500 -7.500 L-3 -8.500 Z" fill="#8a7a28" stroke="#5a4c10" stroke-width="1"/><ellipse cx="-1.500" cy="1.500" rx="5.500" ry="6" fill="#b09838"/><path d="M3 -7 L7 -3 L7.500 2 L5 6 L4 0 Z" fill="#6a5a18"/><ellipse cx="-2" cy="5.500" rx="2.600" ry="2" fill="#d8c070"/><rect x="-2.800" y="4" width="1.800" height="1.200" fill="#3a2a08"/><ellipse cx="-5.200" cy="-.5" rx="2.200" ry="1.600" fill="#e8c8b0" stroke="#d82828" stroke-width="1"/><ellipse cx="0" cy="-.3" rx="2.200" ry="1.600" fill="#e8c8b0" stroke="#d82828" stroke-width="1"/><path d="M2.200 -.5 L5.500 -1.500" stroke="#d82828" stroke-width=".9"/></g><path d="M12.5 4.5 C16.35 4 18 5.5 18 8.5" fill="none" stroke="#111" stroke-width="1.300"/><path d="M15.2 8 h5.600 l-2.800 3 z" fill="#111"/><path d="M10.5 14.15 l3 -3.15 h4 l3 3.15 v7.35 h-10 z" fill="#dfe3f2" stroke="#9aa4cc" stroke-width=".8"/><path d="M11.7 20.45 C15.5 18.35 16 14.15 15 12.26 M13.5 15.725 C15.5 17.3 17.5 17.825 19.5 18.875" fill="none" stroke="#d82020" stroke-width="1.300" stroke-linecap="round"/></svg>
<svg class="abs" style="left:240px;top:75px" width="24" height="24" viewBox="0 0 24 24"><path d="M1.5 5.775 l5.5 -4.275 l3.3 0.95 l2.2 2.375 v6.65 h-11 z" fill="url(#gdvi)" stroke="#101a50" stroke-width=".7"/><path d="M3.7 8.625 l3.3 -6.84 l2.75 0.475 l-2.2 6.65 z" fill="#f0f2fa" stroke="#a8b0d0" stroke-width=".5"/><path d="M12.5 4.5 C16.35 4 18 5.5 18 8.5" fill="none" stroke="#111" stroke-width="1.300"/><path d="M15.2 8 h5.600 l-2.800 3 z" fill="#111"/><path d="M10.5 14.15 l3 -3.15 h4 l3 3.15 v7.35 h-10 z" fill="#dfe3f2" stroke="#9aa4cc" stroke-width=".8"/><path d="M11.7 20.45 C15.5 18.35 16 14.15 15 12.26 M13.5 15.725 C15.5 17.3 17.5 17.825 19.5 18.875" fill="none" stroke="#d82020" stroke-width="1.300" stroke-linecap="round"/></svg>
<svg class="abs" style="left:267px;top:77px" width="8" height="22" viewBox="0 0 8 22"><rect x="0.6" y="0.6" width="1.300" height="1.300" fill="#b8b8b8"/><rect x="1.7" y="1.7" width="1.300" height="1.300" fill="#fff"/><rect x="3.5" y="3.35" width="1.300" height="1.300" fill="#b8b8b8"/><rect x="4.6" y="4.45" width="1.300" height="1.300" fill="#fff"/><rect x="0.6" y="6.1" width="1.300" height="1.300" fill="#b8b8b8"/><rect x="1.7" y="7.2" width="1.300" height="1.300" fill="#fff"/><rect x="3.5" y="8.85" width="1.300" height="1.300" fill="#b8b8b8"/><rect x="4.6" y="9.95" width="1.300" height="1.300" fill="#fff"/><rect x="0.6" y="11.6" width="1.300" height="1.300" fill="#b8b8b8"/><rect x="1.7" y="12.7" width="1.300" height="1.300" fill="#fff"/><rect x="3.5" y="14.35" width="1.300" height="1.300" fill="#b8b8b8"/><rect x="4.6" y="15.45" width="1.300" height="1.300" fill="#fff"/><rect x="0.6" y="17.1" width="1.300" height="1.300" fill="#b8b8b8"/><rect x="1.7" y="18.2" width="1.300" height="1.300" fill="#fff"/><rect x="3.5" y="19.85" width="1.300" height="1.300" fill="#b8b8b8"/><rect x="4.6" y="20.95" width="1.300" height="1.300" fill="#fff"/></svg>
<svg class="abs" style="left:274px;top:75px" width="24" height="24" viewBox="0 0 24 24"><path d="M2 1.5 h5.5 l2.5 2.5 v8 h-8 z" fill="#eef0fa" stroke="#8c98c4" stroke-width=".8"/><path d="M7.5 1.5 v2.5 h2.5" fill="#e8ebf5" stroke="#8c98c4" stroke-width=".6"/><path d="M3.500 5.500 h5 M3.500 7.500 h5 M3.500 9.500 h5" stroke="#98a4cc" stroke-width=".8"/><path d="M11.5 4.5 C15.35 4 17 5.5 17 8.5" fill="none" stroke="#111" stroke-width="1.300"/><path d="M14.2 8 h5.600 l-2.800 3 z" fill="#111"/><circle cx="16" cy="17" r="5.200" fill="url(#gglobe2)" stroke="#0a3fc0" stroke-width=".6"/><path d="M13 15.500 q2 -2 4 -0.500 q1.500 1.500 -1 2.500 q-1 1.500 0.500 3 q-3 -0.500 -3.500 -2.500 z" fill="#d8ecff" opacity=".85"/></svg>
<svg class="abs" style="left:298px;top:75px" width="24" height="24" viewBox="0 0 24 24"><circle cx="12" cy="12" r="9.200" fill="url(#gglobe)" stroke="#3a90c8" stroke-width=".8"/><path d="M4 9 Q7 3.500 13 3.200 Q11.500 5.500 14 7 Q11 9.500 11 13 Q7 14 4.500 12 Z" fill="#28b840"/><path d="M14.500 5 Q19.500 6 20.800 12 Q19.500 17 16 17 Q14 13.500 16 10.500 Q13.500 8 14.500 5 Z" fill="#28b840"/><path d="M6.500 15.500 Q10.500 13.500 13.500 16.500 Q13.500 20 10.500 21 Q7 19.500 6.500 15.500 Z" fill="#34c450"/><ellipse cx="9.500" cy="7.500" rx="4.500" ry="2.500" fill="#fff" opacity=".55"/><ellipse cx="15" cy="16" rx="2.500" ry="1.500" fill="#fff" opacity=".4"/></svg>
<svg class="abs" style="left:326px;top:77px" width="8" height="22" viewBox="0 0 8 22"><rect x="0.6" y="0.6" width="1.300" height="1.300" fill="#b8b8b8"/><rect x="1.7" y="1.7" width="1.300" height="1.300" fill="#fff"/><rect x="3.5" y="3.35" width="1.300" height="1.300" fill="#b8b8b8"/><rect x="4.6" y="4.45" width="1.300" height="1.300" fill="#fff"/><rect x="0.6" y="6.1" width="1.300" height="1.300" fill="#b8b8b8"/><rect x="1.7" y="7.2" width="1.300" height="1.300" fill="#fff"/><rect x="3.5" y="8.85" width="1.300" height="1.300" fill="#b8b8b8"/><rect x="4.6" y="9.95" width="1.300" height="1.300" fill="#fff"/><rect x="0.6" y="11.6" width="1.300" height="1.300" fill="#b8b8b8"/><rect x="1.7" y="12.7" width="1.300" height="1.300" fill="#fff"/><rect x="3.5" y="14.35" width="1.300" height="1.300" fill="#b8b8b8"/><rect x="4.6" y="15.45" width="1.300" height="1.300" fill="#fff"/><rect x="0.6" y="17.1" width="1.300" height="1.300" fill="#b8b8b8"/><rect x="1.7" y="18.2" width="1.300" height="1.300" fill="#fff"/><rect x="3.5" y="19.85" width="1.300" height="1.300" fill="#b8b8b8"/><rect x="4.6" y="20.95" width="1.300" height="1.300" fill="#fff"/></svg>
<svg class="abs" style="left:333px;top:75px" width="24" height="24" viewBox="0 0 24 24"><path d="M10.736 9.236 L14.5 13.5" stroke="#b87818" stroke-width="3" stroke-linecap="round"/><path d="M11.236 9.736 L14.2 13.2" stroke="#f8b840" stroke-width="1.2" stroke-linecap="round"/><circle cx="7" cy="5.5" r="3.8" fill="url(#glens)" stroke="#8aa8d8" stroke-width="1.400"/><g transform="translate(18 17) scale(0.555556)"><path d="M0 -9.500 L3 -8.500 L6 -8 L7.500 -5 L9.500 -2 L8.500 1.500 L9 4.500 L6 6.500 L4 9 L0 9.500 L-3.500 9 L-6 6.500 L-8.500 4 L-8.500 0 L-8 -4 L-5.500 -7.500 L-3 -8.500 Z" fill="#8a7a28" stroke="#5a4c10" stroke-width="1"/><ellipse cx="-1.500" cy="1.500" rx="5.500" ry="6" fill="#b09838"/><path d="M3 -7 L7 -3 L7.500 2 L5 6 L4 0 Z" fill="#6a5a18"/><ellipse cx="-2" cy="5.500" rx="2.600" ry="2" fill="#d8c070"/><rect x="-2.800" y="4" width="1.800" height="1.200" fill="#3a2a08"/><ellipse cx="-5.200" cy="-.5" rx="2.200" ry="1.600" fill="#e8c8b0" stroke="#d82828" stroke-width="1"/><ellipse cx="0" cy="-.3" rx="2.200" ry="1.600" fill="#e8c8b0" stroke="#d82828" stroke-width="1"/><path d="M2.200 -.5 L5.500 -1.500" stroke="#d82828" stroke-width=".9"/></g><path d="M6.500 12.500 v7" stroke="#111" stroke-width="1.300"/><path d="M3.700 18 h5.600 l-2.800 3.200 z" fill="#111"/></svg>
<div class="frame" style="left:4px;top:101px;width:191px;height:493px;border-color:#8a8a8a;border-radius:2px"></div>
<div class="abs" style="left:24px;top:121px;width:169px;height:18.500px;background:#f3eded"></div>
<div class="abs" style="left:42px;top:159.300px;width:151px;height:17px;background:#f3eded"></div>
<div class="abs" style="left:14.500px;top:122px;width:0;height:24px;border-left:1px dotted #777"></div>
<div class="abs" style="left:19px;top:130px;width:4px;height:0;border-top:1px dotted #777"></div>
<div class="abs" style="left:19px;top:150px;width:5px;height:0;border-top:1px dotted #777"></div>
<div class="abs" style="left:32.500px;top:158px;width:0;height:28px;border-left:1px dotted #777"></div>
<div class="abs" style="left:33px;top:168px;width:8px;height:0;border-top:1px dotted #777"></div>
<div class="abs" style="left:33px;top:186px;width:8px;height:0;border-top:1px dotted #777"></div>
<svg class="abs" style="left:10px;top:125.25px" width="10" height="10" viewBox="0 0 10 10"><rect x=".5" y=".5" width="8.500" height="8.500" fill="#fff" stroke="#a8a8a8"/><path d="M2.500 4.750 h4.500 M4.750 2.500 v4.500" stroke="#000" stroke-width="1.100"/></svg>
<svg class="abs" style="left:10px;top:145.25px" width="10" height="10" viewBox="0 0 10 10"><rect x=".5" y=".5" width="8.500" height="8.500" fill="#fff" stroke="#a8a8a8"/><path d="M2.500 4.750 h4.500" stroke="#000" stroke-width="1.100"/></svg>
<svg class="abs" style="left:6px;top:104px" width="16" height="16" viewBox="0 0 16 16"><path d="M1.500 2 Q3 6 4.500 12.500 L9 14 L14.500 11.500 L12 2.500 L9 1.500 L7.500 4 L5 1.500 Z" fill="#dfe8fb" stroke="#6a8ad8" stroke-width=".9"/><path d="M1.500 2 Q3 6 4.500 12.500 L9 14 L6 3 Z" fill="#6f98ee" stroke="#3a64c8" stroke-width=".8"/></svg>
<svg class="abs" style="left:24px;top:121px" width="16" height="18" viewBox="0 0 16 18"><path d="M1.500 13 L8 4 L12 3.500 L13 7 L6 16.500 Z" fill="#dfe5f6" stroke="#7d8cc0" stroke-width=".9"/><path d="M10.500 5.500 Q11 1.500 13.500 1.500 Q15 2 13 5" fill="none" stroke="#555" stroke-width=".9"/><circle cx="10.800" cy="5.800" r=".9" fill="#7d8cc0"/></svg>
<svg class="abs" style="left:25px;top:143px" width="14" height="14" viewBox="0 0 14 14"><circle cx="7" cy="7" r="5.600" fill="#2454b8" stroke="#10307c" stroke-width="1.100"/><circle cx="6.500" cy="6" r="4" fill="#3f74dc" opacity=".7"/><text x="7" y="10.300" text-anchor="middle" font-family="DejaVu Sans, Liberation Sans, sans-serif" font-weight="bold" font-size="9.500" fill="#fff">C</text></svg>
<svg class="abs" style="left:43px;top:161px" width="14" height="14" viewBox="0 0 14 14"><circle cx="7" cy="7" r="5.600" fill="#2454b8" stroke="#10307c" stroke-width="1.100"/><circle cx="6.500" cy="6" r="4" fill="#3f74dc" opacity=".7"/><text x="7" y="10.300" text-anchor="middle" font-family="DejaVu Sans, Liberation Sans, sans-serif" font-weight="bold" font-size="9.500" fill="#fff">S</text></svg>
<svg class="abs" style="left:43px;top:179.2px" width="14" height="14" viewBox="0 0 14 14"><circle cx="7" cy="7" r="5.600" fill="#2454b8" stroke="#10307c" stroke-width="1.100"/><circle cx="6.500" cy="6" r="4" fill="#3f74dc" opacity=".7"/><text x="7" y="10.300" text-anchor="middle" font-family="DejaVu Sans, Liberation Sans, sans-serif" font-weight="bold" font-size="9.500" fill="#fff">S</text></svg>
<div id="r0" class="t " style="left:21.7px;top:106px;line-height:16px;letter-spacing:0.028px;">d0branes_mdiff.tex</div>
<div class="t " style="left:40.3px;top:124px;line-height:16px;">Labels</div>
<div id="r1" class="t " style="left:40.3px;top:143px;line-height:16px;letter-spacing:0.239px;">D-geometry (line 1)</div>
<div class="abs" style="left:58px;top:158px;width:135.500px;height:40px;overflow:hidden"><div class="t " style="left:0.8px;top:3px;line-height:16px;letter-spacing:.27px">The D-geometry axio</div><div class="t " style="left:0.8px;top:21px;line-height:16px;letter-spacing:.42px">Matrix valued diffeom</div></div>
<div class="track" style="left:5px;top:578px;width:188px;height:14px"></div><div class="sbtn" style="left:6px;top:578px;width:13px;height:13.5px"></div><svg class="abs" style="left:0;top:0;overflow:visible" width="1" height="1"><path d="M10.3 584.75 l4 -3.500 v7 z" fill="#000"/></svg><div class="sbtn" style="left:19.5px;top:578px;width:86.5px;height:13.5px"></div><svg class="abs" style="left:57px;top:578.8px" width="12" height="12" viewBox="0 0 12 12"><rect x="1" y="2.5" width="1.200" height="1.200" fill="#fff"/><rect x="1" y="5.1" width="1.200" height="1.200" fill="#fff"/><rect x="1" y="7.7" width="1.200" height="1.200" fill="#fff"/><rect x="3.8" y="2.5" width="1.200" height="1.200" fill="#fff"/><rect x="3.8" y="5.1" width="1.200" height="1.200" fill="#fff"/><rect x="3.8" y="7.7" width="1.200" height="1.200" fill="#fff"/><rect x="6.6" y="2.5" width="1.200" height="1.200" fill="#fff"/><rect x="6.6" y="5.1" width="1.200" height="1.200" fill="#fff"/><rect x="6.6" y="7.7" width="1.200" height="1.200" fill="#fff"/><rect x="9.4" y="2.5" width="1.200" height="1.200" fill="#fff"/><rect x="9.4" y="5.1" width="1.200" height="1.200" fill="#fff"/><rect x="9.4" y="7.7" width="1.200" height="1.200" fill="#fff"/></svg><div class="sbtn" style="left:165px;top:578px;width:13.5px;height:13.5px"></div><svg class="abs" style="left:0;top:0;overflow:visible" width="1" height="1"><path d="M169.55 584.75 l4 -3.500 v7 z" fill="#000"/></svg><div class="sbtn" style="left:178.5px;top:578px;width:13.5px;height:13.5px"></div><svg class="abs" style="left:0;top:0;overflow:visible" width="1" height="1"><path d="M187.45 584.75 l-4 -3.500 v7 z" fill="#000"/></svg><div class="stab" style="left:194px;top:101px;width:22.500px;height:32.5px"></div>
<div class="stab" style="left:194px;top:134px;width:22.500px;height:31px"></div>
<div class="stab sel" style="left:194px;top:166px;width:22.500px;height:82px"></div>
<svg class="abs" style="left:197px;top:109px" width="18" height="16" viewBox="2 3 21 18"><path d="M2.500 7.500 h5.500 l1.500 2 h8 v10 h-15 z" fill="#5a8cf0" stroke="#2a50c8" stroke-width=".8"/><path d="M5.500 10 l10.500 -6 l3.500 5.500 l-2 4 z" fill="#fbfdff" stroke="#8aa8e8" stroke-width=".6"/><path d="M6.500 11.500 h16 l-4 8.500 h-16 z" fill="url(#gblue)" stroke="#1f44c0" stroke-width=".8"/><path d="M8 12.800 h9 l-1.500 3 h-9 z" fill="#d0e4ff" opacity=".85"/><path d="M5 18.500 h12" stroke="#fff" stroke-width="1.200" opacity=".9"/></svg>
<svg class="abs" style="left:198px;top:142px" width="16" height="16" viewBox="2 1 20 21"><path d="M3 2 h7 l3.5 3.5 v10 h-10.5 z" fill="url(#gpage)" stroke="#b8bdd6" stroke-width=".8"/><path d="M10 2 v3.5 h3.5" fill="#e8ebf5" stroke="#b8bdd6" stroke-width=".6"/><path d="M10 7.5 h7 l3.5 3.5 v10.5 h-10.5 z" fill="url(#gpage)" stroke="#b8bdd6" stroke-width=".8"/><path d="M17 7.5 v3.5 h3.5" fill="#e8ebf5" stroke="#b8bdd6" stroke-width=".6"/></svg>
<svg class="abs" style="left:199px;top:173.500px" width="9" height="9" viewBox="0 0 9 9"><path d="M1 0 v7.500 h3 M1 3 h3" fill="none" stroke="#444" stroke-width="1"/><rect x="4.500" y="1.500" width="3.500" height="2.500" fill="#ddd" stroke="#444" stroke-width=".8"/><rect x="4.500" y="6" width="3.500" height="2.500" fill="#ddd" stroke="#444" stroke-width=".8"/></svg>
<div class="t" style="left:199.500px;top:186.500px;line-height:16px;transform-origin:0 0;transform:translate(12.500px,0) rotate(90deg)">Structure</div>
<div class="stab" style="left:194px;top:248.5px;width:22.500px;height:31px"></div>
<div class="t" style="left:195.500px;width:21px;text-align:center;top:255.5px;line-height:16px;">÷</div>
<div class="stab" style="left:194px;top:281.3px;width:22.500px;height:31px"></div>
<div class="t" style="left:195.500px;width:21px;text-align:center;top:288.3px;line-height:16px;font-weight:bold;font-size:14px;">⇒</div>
<div class="stab" style="left:194px;top:314.1px;width:22.500px;height:31px"></div>
<div class="t" style="left:195.500px;width:21px;text-align:center;top:321.1px;line-height:16px;font-size:10.500px;">∀</div>
<div class="stab" style="left:194px;top:346.9px;width:22.500px;height:31px"></div>
<div class="t" style="left:195.500px;width:21px;text-align:center;top:353.9px;line-height:16px;-webkit-text-stroke:.3px #000;">{}</div>
<div class="stab" style="left:194px;top:379.7px;width:22.500px;height:31px"></div>
<div class="t" style="left:195.500px;width:21px;text-align:center;top:386.7px;line-height:16px;">λ</div>
<div class="stab" style="left:194px;top:412.5px;width:22.500px;height:31px"></div>
<div class="t" style="left:195.500px;width:21px;text-align:center;top:419.5px;line-height:16px;">å</div>
<div class="stab" style="left:194px;top:445.3px;width:22.500px;height:31px"></div>
<div class="t" style="left:195.500px;width:21px;text-align:center;top:452.3px;line-height:16px;font-size:7px;letter-spacing:1.200px;">MP</div>
<div class="abs" style="left:221.500px;top:126px;width:575px;height:1px;background:#8e8e8e"></div>
<div class="etab sel" style="left:221px;top:101px;width:162.500px;height:26.500px"></div>
<div class="etab" style="left:384px;top:104px;width:139px;height:22px"></div>
<svg class="abs" style="left:229px;top:105.5px" width="15" height="15" viewBox="0 0 15 15"><path d="M.5 .5 h14 v10 l-4 4 h-10 z" fill="#fdfdff" stroke="#9a9ca8" stroke-width=".9"/><path d="M14.500 10.500 h-4 v4" fill="#dfe3ee" stroke="#8e9ab8" stroke-width=".7"/><path d="M2 1.600 h11" stroke="#5a9af4" stroke-width="1.200"/><text x="2.200" y="9.200" font-family="DejaVu Serif, Liberation Serif, serif" font-weight="bold" font-size="5.600" fill="#3a68e0" letter-spacing="-.3">T<tspan dy="1.500">E</tspan><tspan dy="-1.500">X</tspan></text></svg>
<svg class="abs" style="left:394px;top:107.5px" width="15" height="15" viewBox="0 0 15 15"><path d="M.5 .5 h14 v10 l-4 4 h-10 z" fill="#fdfdff" stroke="#9a9ca8" stroke-width=".9"/><path d="M14.500 10.500 h-4 v4" fill="#dfe3ee" stroke="#8e9ab8" stroke-width=".7"/><path d="M2 1.600 h11" stroke="#5a9af4" stroke-width="1.200"/><text x="2.200" y="9.200" font-family="DejaVu Serif, Liberation Serif, serif" font-weight="bold" font-size="5.600" fill="#3a68e0" letter-spacing="-.3">T<tspan dy="1.500">E</tspan><tspan dy="-1.500">X</tspan></text></svg>
<div id="t0" class="t " style="left:247.7px;top:107px;line-height:16px;letter-spacing:0px;">d0branes_mdiff.tex</div>
<div id="t1" class="t " style="left:411px;top:108px;line-height:16px;letter-spacing:0.072px;">proefschrift.tex</div>
<div class="frame" style="left:221px;top:127px;width:575px;height:318.500px;border-top:1px solid #efefef"></div>
<div class="abs" style="left:222px;top:128px;width:15px;height:316.500px;background:#ebe9eb"></div>
<div class="abs" style="left:241px;top:225.800px;width:539px;height:16.400px;background:#e9eefa"></div>
<div class="abs" id="edclip" style="left:237px;top:128px;width:543px;height:316.500px;overflow:hidden">
<div id="e0" class="t el" style="left:4.5px;top:1px;line-height:16px;letter-spacing:-0.064px;">has the diffeomorphism invariance in the <i class="g">$dN^2$</i> dimensional: since <i class="g">$G_{<s>I</s><s>J</s>}$</i> is a</div>
<div id="e1" class="t el" style="left:4.5px;top:18px;line-height:16px;letter-spacing:-0.081px;">metric and <i class="g">$</i><i class="o">\dot</i><i class="g"> X^<s>I</s>$</i> a vector the combination</div>
<div id="e2" class="t el" style="left:4.5px;top:34px;line-height:16px;letter-spacing:-0.163px;"><i class="r">\begin</i>{<i class="b">displaymath</i>}</div>
<div id="e3" class="t el" style="left:22.4px;top:50px;line-height:16px;letter-spacing:-0.147px;"><i class="g">G_{<s>I</s><s>J</s>} </i><i class="o">\dot</i><i class="g"> X^<s>I</s> </i><i class="o">\dot</i><i class="g"> X^<s>J</s></i></div>
<div id="e4" class="t el" style="left:4.5px;top:66px;line-height:16px;letter-spacing:-0.153px;"><i class="r">\end</i>{<i class="b">displaymath</i>}</div>
<div id="e5" class="t el" style="left:4.5px;top:82px;line-height:16px;letter-spacing:-0.009px;">is diffeomorphism invariant. However what is required is invariance under</div>
<div id="e6" class="t el" style="left:4.5px;top:99px;line-height:16px;letter-spacing:-0.076px;"><i class="m">\thisisclearlybogus</i></div>
<div id="e7" class="t el" style="left:4.5px;top:115px;line-height:16px;letter-spacing:0.004px;"> diffeomorphims of the <i class="g">$d$</i> dimensional space. It is not at all clear how</div>
<div id="e8" class="t el" style="left:8.5px;top:131px;line-height:16px;letter-spacing:0.092px;"><i class="m">\emph</i>{those} diffeomorphisms act on the <i class="g">$X^<s>I</s>$</i>. Take for example the <i class="g">$d$</i></div>
<div id="e9" class="t el" style="left:9.2px;top:147px;line-height:16px;letter-spacing:-0.096px;">dimensional diffeomorphism (diff)</div>
<div id="e10" class="t el" style="left:4.5px;top:163px;line-height:16px;letter-spacing:-0.237px;"><i class="r">\begin</i>{<i class="b">equation</i>}<i class="o">\label</i><i class="g">{eq:diff}</i></div>
<div id="e11" class="t el" style="left:23.2px;top:180px;line-height:16px;letter-spacing:0.077px;"><i class="g">x^i = f^i(x) = x^i + f^i_{jk} x^j x^k + f^i_{jkl} x^j x^k x^l + </i><i class="o">\dots</i></div>
<div id="e12" class="t el" style="left:4.5px;top:196px;line-height:16px;letter-spacing:-0.372px;"><i class="r">\end</i>{<i class="b">equation</i>}</div>
<div id="e13" class="t el" style="left:4.5px;top:212px;line-height:16px;letter-spacing:-0.026px;">and its generalization to <i class="g">$dN^2$</i> dimensional diffeomorphisms (DIFF or matrix</div>
<div id="e14" class="t el" style="left:4.5px;top:228px;line-height:16px;letter-spacing:-0.043px;">valued diffeomorphisms)</div>
<div id="e15" class="t el" style="left:4.5px;top:244px;line-height:16px;letter-spacing:-0.149px;"><i class="r">\begin</i>{<i class="b">equation</i>}<i class="o">\label</i><i class="g">{eq:DIFF}</i></div>
<div id="e16" class="t el" style="left:23.2px;top:261px;line-height:16px;letter-spacing:-0.004px;"><i class="g">X^<s>I</s> = F^<s>I</s>(X) = X^<s>I</s> + F^<s>I</s>_{<s>J</s>K} X^<s>J</s> X^K + F^<s>I</s>_{<s>J</s>KL} X^<s>J</s> X^K X^L + </i><i class="o">\dots</i></div>
<div id="e17" class="t el" style="left:4.5px;top:277px;line-height:16px;letter-spacing:-0.372px;"><i class="r">\end</i>{<i class="b">equation</i>}</div>
<div id="e18" class="t el" style="left:4.5px;top:293px;line-height:16px;letter-spacing:0.012px;"><s>I</s>f one wants to impose diff invariance in the action for D0-branes one has to lift</div>
<div id="e19" class="t el" style="left:4.5px;top:309px;line-height:16px;letter-spacing:-0.002px;">the transformation <i class="r">\ref</i>{<i class="b">eq:diff</i>} to DIFF. That is, given <i class="g">$f^i$</i> construct a unique</div>
</div>
<svg class="abs" style="left:225px;top:163.2px;overflow:visible" width="12" height="46.4"><rect x=".8" y=".500" width="9.500" height="9.500" fill="#fff" stroke="#333" stroke-width="1.100"/><path d="M3 5.250 h5" stroke="#333" stroke-width="1.100"/><path d="M5.500 10 V45.2 H11.500" fill="none" stroke="#222" stroke-width="1.100"/></svg>
<svg class="abs" style="left:225px;top:292.8px;overflow:visible" width="12" height="46.4"><rect x=".8" y=".500" width="9.500" height="9.500" fill="#fff" stroke="#333" stroke-width="1.100"/><path d="M3 5.250 h5" stroke="#333" stroke-width="1.100"/><path d="M5.500 10 V45.2 H11.500" fill="none" stroke="#222" stroke-width="1.100"/></svg>
<svg class="abs" style="left:225px;top:373.8px;overflow:visible" width="12" height="46.4"><rect x=".8" y=".500" width="9.500" height="9.500" fill="#fff" stroke="#333" stroke-width="1.100"/><path d="M3 5.250 h5" stroke="#333" stroke-width="1.100"/><path d="M5.500 10 V45.2 H11.500" fill="none" stroke="#222" stroke-width="1.100"/></svg>
<svg class="abs" style="left:240.500px;top:259px" width="5" height="17" viewBox="0 0 5 17"><path d="M1 0 l3 2 l-3 2 l3 2 l-3 2 l3 2 l-3 2 l3 2 l-3 2" fill="none" stroke="#777" stroke-width=".8"/></svg>
<svg class="abs" style="left:240.500px;top:275.2px" width="5" height="17" viewBox="0 0 5 17"><path d="M1 0 l3 2 l-3 2 l3 2 l-3 2 l3 2 l-3 2 l3 2 l-3 2" fill="none" stroke="#777" stroke-width=".8"/></svg>
<div class="track" style="left:780px;top:128px;width:15px;height:317px"></div>
<div class="sbtn v" style="left:780.5px;top:128.5px;width:14.5px;height:13.5px"></div><svg class="abs" style="left:0;top:0;overflow:visible" width="1" height="1"><path d="M787.75 133.05 l3.500 4 h-7 z" fill="#000"/></svg>
<div class="sbtn v" style="left:780.5px;top:317.5px;width:14.5px;height:62px"></div>
<svg class="abs" style="left:782px;top:342.5px" width="12" height="12" viewBox="0 0 12 12"><rect x="2.5" y="1" width="1.200" height="1.200" fill="#fff"/><rect x="5.1" y="1" width="1.200" height="1.200" fill="#fff"/><rect x="7.7" y="1" width="1.200" height="1.200" fill="#fff"/><rect x="2.5" y="3.8" width="1.200" height="1.200" fill="#fff"/><rect x="5.1" y="3.8" width="1.200" height="1.200" fill="#fff"/><rect x="7.7" y="3.8" width="1.200" height="1.200" fill="#fff"/><rect x="2.5" y="6.6" width="1.200" height="1.200" fill="#fff"/><rect x="5.1" y="6.6" width="1.200" height="1.200" fill="#fff"/><rect x="7.7" y="6.6" width="1.200" height="1.200" fill="#fff"/><rect x="2.5" y="9.4" width="1.200" height="1.200" fill="#fff"/><rect x="5.1" y="9.4" width="1.200" height="1.200" fill="#fff"/><rect x="7.7" y="9.4" width="1.200" height="1.200" fill="#fff"/></svg>
<div class="sbtn v" style="left:780.5px;top:415.5px;width:14.5px;height:14px"></div><svg class="abs" style="left:0;top:0;overflow:visible" width="1" height="1"><path d="M787.75 420.3 l3.500 4 h-7 z" fill="#000"/></svg>
<div class="sbtn v" style="left:780.5px;top:429.5px;width:14.5px;height:14px"></div><svg class="abs" style="left:0;top:0;overflow:visible" width="1" height="1"><path d="M787.75 438.7 l3.500 -4 h-7 z" fill="#000"/></svg>
<div class="abs" style="left:222px;top:449px;width:574px;height:0;border-top:1px dotted #fff"></div><div class="abs" style="left:222px;top:450px;width:574px;height:1px;background:#e4e4e4"></div>
<div class="abs" style="left:218px;top:230px;width:0;height:240px;border-left:1px dotted #fff"></div>
<div class="frame" style="left:221.500px;top:474px;width:574.500px;height:119px"></div>
<div class="etab sel" style="left:221.500px;top:453px;width:136px;height:22px"></div>
<div class="etab" style="left:358.500px;top:454px;width:74px;height:20px"></div>
<div class="etab" style="left:433.500px;top:454px;width:85px;height:20px"></div>
<svg class="abs" style="left:226px;top:457.500px" width="13" height="13" viewBox="4.500 4 15.500 15.500"><rect x="4.500" y="4" width="15.500" height="15.500" fill="url(#ggreen)"/><path d="M4.500 14.500 L8 12 L10.500 12.500 L14 6 L16 11 L18 9.500 L20 10" fill="none" stroke="#f0d820" stroke-width="1.300"/><path d="M4.500 19.500 v-3 q3 -2.500 5 -1 q2 -2 4 1 l1 3 z" fill="#2aa040" opacity=".8"/></svg>
<svg class="abs" style="left:362px;top:456.500px" width="15" height="15" viewBox="0 0 15 15"><rect x=".5" y="1" width="10.500" height="9.500" fill="#f4f6fa" stroke="#8890a8" stroke-width=".9"/><path d="M2 8 l2.500 -3 l2 2 l2.500 -3.500" fill="none" stroke="#7a84a8" stroke-width=".8"/><path d="M7.500 7.500 L13.500 13.500" stroke="#c89018" stroke-width="2.200" stroke-linecap="round"/><path d="M5.500 5.500 l2.500 0.500 l0.500 2.500" fill="none" stroke="#444" stroke-width="1"/></svg>
<svg class="abs" style="left:436.500px;top:456.500px" width="15" height="15" viewBox="0 0 15 15"><rect x="1" y=".8" width="12" height="9" fill="#5a8ae8" stroke="#2a4ab8" stroke-width=".9"/><rect x="2.500" y="2" width="9" height="3" fill="#cfe0ff"/><path d="M7 3.500 q3 2 3 5 q2.500 1 2 3.500 q-2 2.500 -5 2 q-3.500 0.500 -5 -2 q-0.500 -2.500 2 -3.500 q0 -3 3 -5 z" fill="#f0b030" stroke="#b87810" stroke-width=".6"/></svg>
<div id="t2" class="t " style="left:248.3px;top:457px;line-height:16px;letter-spacing:-0.145px;">Log &amp; Messages</div>
<div id="t3" class="t " style="left:383.8px;top:457px;line-height:16px;letter-spacing:-0.658px;">Output</div>
<div id="t4" class="t " style="left:459.2px;top:457px;line-height:16px;letter-spacing:0.227px;">Konsole</div>
<div id="l0" class="t " style="left:227.7px;top:479px;line-height:16px;letter-spacing:0.099px;"><b>[LaTeX]</b> proefschrift.tex =&gt; proefschrift.dvi (latex)</div>
<div id="l1" class="t " style="left:227.7px;top:496px;line-height:16px;color:#f01010;letter-spacing:-0.125px;"><b>[LaTeX]</b> finished with exit status 1</div>
<div id="l2" class="t " style="left:227.7px;top:513px;line-height:16px;color:#f01010;letter-spacing:0.015px;">d0branes/d0branes_mdiff:57:Undefined control sequence. \thisisclearlybogus</div>
<div id="l3" class="t " style="left:227.7px;top:531px;line-height:16px;letter-spacing:0.213px;"><b>[LaTeX]</b> 1 error, 2 warnings, 16 badboxes</div>
<div class="sbox" style="left:5px;top:597px;width:587px;height:19px"></div>
<div class="sbox" style="left:593.500px;top:597px;width:200px;height:19px"></div>
<div id="s0" class="t " style="left:7.4px;top:599px;line-height:16px;letter-spacing:0.135px;">Project: Proefschrift</div>
<div id="s1" class="t " style="left:599.8px;top:599px;line-height:16px;letter-spacing:0.175px;">Line: 57 Col: 1  INS  NORM</div>
<div id="bl"></div><div id="br"></div><div id="bb"></div>
</div>
</body></html>
